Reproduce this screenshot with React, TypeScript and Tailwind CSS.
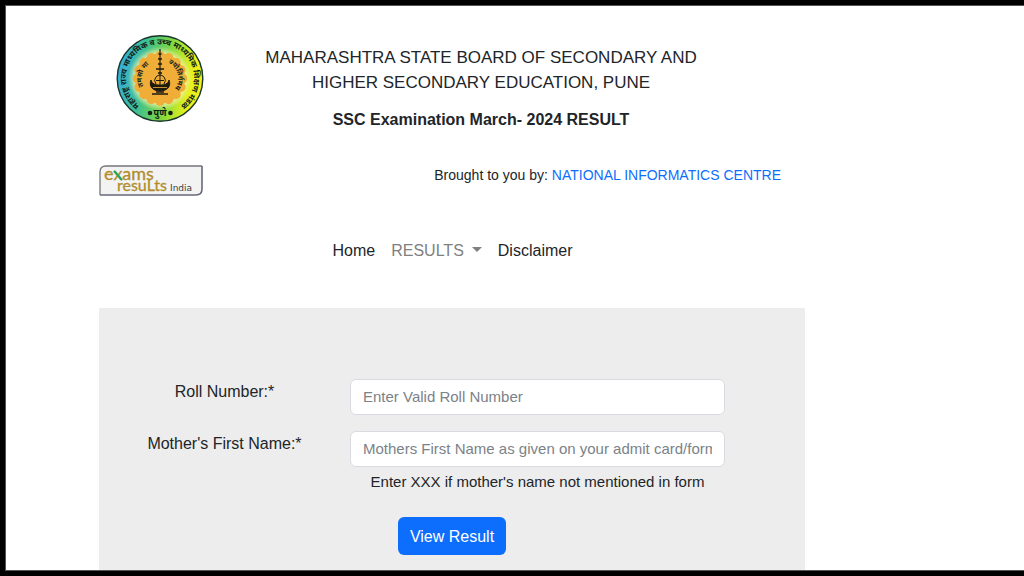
import { useState } from "react";

const rays = Array.from({ length: 16 }, (_, i) => i * 22.5);

const BoardEmblem = () => (
  <svg viewBox="0 0 88 88" className="size-[88px]" role="img" aria-label="Board emblem">
    <defs>
      <linearGradient id="ring" x1="0" y1="0.4" x2="1" y2="0.55">
        <stop offset="0" stopColor="#35aee0" />
        <stop offset="0.3" stopColor="#3fc08f" />
        <stop offset="0.58" stopColor="#7fd840" />
        <stop offset="0.85" stopColor="#e6f01c" />
        <stop offset="1" stopColor="#f4ee1a" />
      </linearGradient>
      <radialGradient id="glow">
        <stop offset="0.8" stopColor="#f6f3b0" stopOpacity="0.75" />
        <stop offset="1" stopColor="#f6f3b0" stopOpacity="0" />
      </radialGradient>
      <path id="outerArc" d="M27 73.9 A34 34 0 1 1 61 73.9" />
      <path id="leftArc" d="M34 59 A17 17 0 0 1 42 27.5" />
      <path id="rightArc" d="M46 27.5 A17 17 0 0 1 54 59" />
    </defs>
    <circle cx="44" cy="44.5" r="42.8" fill="url(#ring)" stroke="#17352b" strokeWidth="1.4" />
    <circle cx="44" cy="44.5" r="32" fill="url(#glow)" />
    {rays.map((angle) => (
      <circle
        key={angle}
        cx="44"
        cy="22"
        r="4.8"
        fill="#f0ae38"
        transform={`rotate(${angle} 44 44.5)`}
      />
    ))}
    <circle cx="44" cy="44.5" r="25" fill="#f0ae38" />
    <g fill="#111d18" fontFamily="'Noto Sans', sans-serif" fontWeight="700">
      <text fontSize="8">
        <textPath href="#outerArc" startOffset="50%" textAnchor="middle">
          महाराष्ट्र राज्य माध्यमिक व उच्च माध्यमिक शिक्षण मंडळ
        </textPath>
      </text>
      <text x="44" y="82" fontSize="9" textAnchor="middle">पुणे</text>
      <text fontSize="7">
        <textPath href="#leftArc" startOffset="50%" textAnchor="middle">तमसो मा</textPath>
      </text>
      <text fontSize="7">
        <textPath href="#rightArc" startOffset="50%" textAnchor="middle">ज्योतिर्गमय</textPath>
      </text>
    </g>
    <circle cx="34" cy="79" r="2.3" fill="#111d18" />
    <circle cx="54.5" cy="79" r="2.3" fill="#111d18" />
    <g fill="none" stroke="#1d1a10" strokeWidth="1">
      <path d="M44 15 V42" strokeWidth="1.2" />
      <path d="M42.5 20 H45.5 M42 25 H46 M42 30 H46 M40 35 H48 M42 39 H46" strokeWidth="1.6" />
      <path d="M35 46 C32 54 39 57 44 57 C49 57 56 54 53 46 C52 50 49 51 44 51 C39 51 36 50 35 46 Z" fill="#1d1a10" />
      <path d="M37 53.5 H51" stroke="#f0ae38" strokeWidth="0.8" />
      <path d="M40 50 Q37 46 40 43 Q44 39 48 43 Q51 46 48 50 M44 42 V51 M40 46.5 H48" />
      <path d="M36 60 H52 M40 58 H48" strokeWidth="1.5" />
    </g>
  </svg>
);

const ExamResultsLogo = () => (
  <svg viewBox="0 0 104 31" className="w-[104px] h-[31px]" role="img" aria-label="Exams Results India">
    <path d="M6 1 H103 V25 L98 30 H1 V6 Z" fill="#f3f3f4" strokeLinejoin="round" />
    <path d="M1 30 V7 Q1 1 7 1 H103" fill="none" stroke="#74747a" strokeWidth="1.3" />
    <path d="M103 1 V24 Q103 30 97 30 H1" fill="none" stroke="#66697a" strokeWidth="1.6" />
    <g fill="#b08d2c" stroke="#b08d2c" strokeWidth="0.3" fontFamily="Lato, sans-serif">
      <text x="5" y="15" fontSize="18">exams</text>
      <text x="18" y="26" fontSize="16">resuLts</text>
    </g>
    <path d="M15 6 L23 15" stroke="#1fa866" strokeWidth="2" />
    <text x="71" y="26" fontSize="9" fill="#3b3b3b" fontFamily="'DejaVu Sans', sans-serif">India</text>
  </svg>
);

const fieldClass =
  "w-full h-9 rounded-md border border-[#d8dce1] bg-white px-3 pb-0.5 text-[15px] text-[#212529] placeholder:text-[#7b8288] focus:outline-none focus:border-[#86b7fe]";

const App = () => {
  const [rollNumber, setRollNumber] = useState("");
  const [motherName, setMotherName] = useState("");

  return (
    <div className="min-h-screen flex bg-black pl-[5px] py-[5px] font-['Liberation_Sans',Arial,sans-serif] text-base text-[#212529]">
      <div className="flex-1 flex flex-col border-y border-l border-[#555] bg-white pl-[93px] pr-[219px]">
        <header>
          <div className="flex pt-7">
            <div className="w-[122px] shrink-0 flex justify-center">
              <BoardEmblem />
            </div>
            <div className="flex-1 pt-[11px] pr-[68px] pl-1 text-center">
              <h1 className="text-[17px] leading-[25px]">
                MAHARASHTRA STATE BOARD OF SECONDARY AND
                <br />
                HIGHER SECONDARY EDUCATION, PUNE
              </h1>
              <h2 className="mt-[13px] font-bold leading-6">SSC Examination March- 2024 RESULT</h2>
            </div>
          </div>
          <div className="flex items-start justify-between pt-[33px] pr-6">
            <ExamResultsLogo />
            <p className="text-[14px] leading-5">
              Brought to you by:{" "}
              <a href="#nic" className="text-[#0d6efd]">
                NATIONAL INFORMATICS CENTRE
              </a>
            </p>
          </div>
        </header>

        <nav className="flex justify-center gap-4 pt-[43px] pb-[45px] pl-px leading-6">
          <a href="#home">Home</a>
          <button type="button" className="flex items-center gap-2 text-[#808080]">
            RESULTS
            <svg viewBox="0 0 10 5" className="w-[10px] h-[5px] mb-1" aria-hidden="true">
              <path d="M0 0 H10 L5 5 Z" fill="currentColor" />
            </svg>
          </button>
          <a href="#disclaimer">Disclaimer</a>
        </nav>

        <main className="flex-1 bg-[#ededed] pt-[71px] pb-3">
          <form onSubmit={(e) => e.preventDefault()}>
            <div className="flex pr-20">
              <label htmlFor="roll" className="w-[251px] shrink-0 pt-px text-center leading-6">
                Roll Number:*
              </label>
              <input
                id="roll"
                type="text"
                className={fieldClass}
                placeholder="Enter Valid Roll Number"
                value={rollNumber}
                onChange={(e) => setRollNumber(e.target.value)}
              />
            </div>
            <div className="flex pt-4 pr-20">
              <label htmlFor="mother" className="w-[251px] shrink-0 pt-px text-center leading-6">
                Mother's First Name:*
              </label>
              <div className="flex-1 text-center">
                <input
                  id="mother"
                  type="text"
                  className={fieldClass}
                  placeholder="Mothers First Name as given on your admit card/form"
                  value={motherName}
                  onChange={(e) => setMotherName(e.target.value)}
                />
                <p className="pt-[3px] text-[15px] leading-6">
                  Enter XXX if mother's name not mentioned in form
                </p>
              </div>
            </div>
            <div className="flex justify-center pt-[23px]">
              <button type="submit" className="h-[38px] rounded-md bg-[#0d6efd] px-3 pt-0.5 text-white">
                View Result
              </button>
            </div>
          </form>
        </main>
      </div>
    </div>
  );
};

export default App;
